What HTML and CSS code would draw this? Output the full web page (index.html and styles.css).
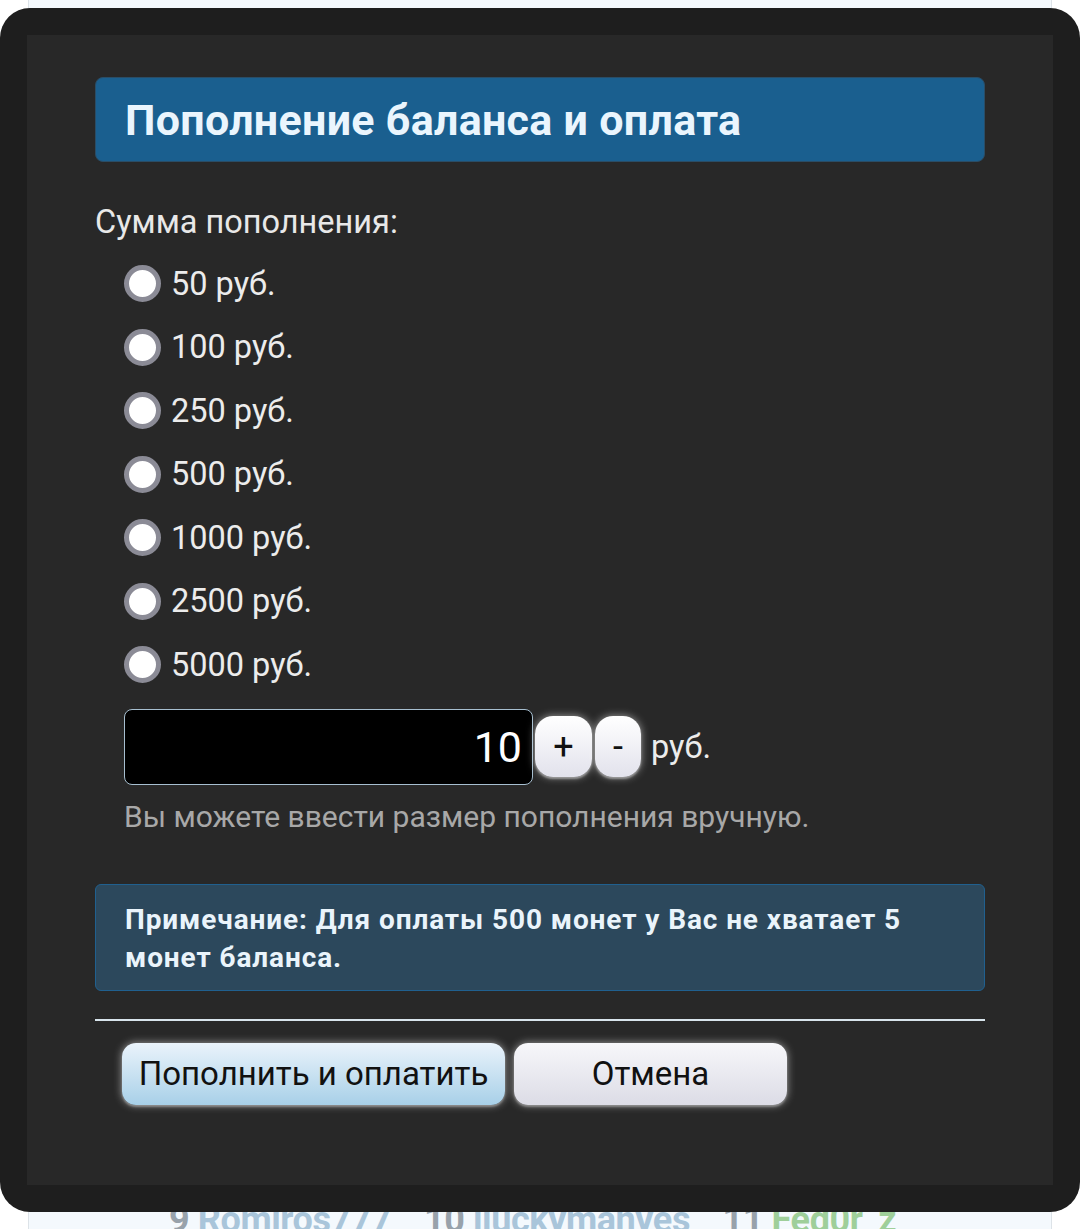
FILE: index.html
```
<!DOCTYPE html>
<html>
<head>
    <title>Пополнение баланса и оплата</title>
    <link rel="stylesheet" href="styles.css">
</head>
<body>
    <div class="page">
        <div class="top-list">
            <span class="num">9</span> <span class="nick">Romiros777</span>
            <span class="num">10</span> <span class="nick">iluckymanyes</span>
            <span class="num">11</span> <span class="nick green">Fed0r_z</span>
        </div>
    </div>

    <div class="modal">
        <div class="modal-inner">
            <h1 class="title">Пополнение баланса и оплата</h1>

            <div class="label">Сумма пополнения:</div>
            <div class="sums">
                <label class="sum"><input type="radio" name="sum" value="50"> 50 руб.</label>
                <label class="sum"><input type="radio" name="sum" value="100"> 100 руб.</label>
                <label class="sum"><input type="radio" name="sum" value="250"> 250 руб.</label>
                <label class="sum"><input type="radio" name="sum" value="500"> 500 руб.</label>
                <label class="sum"><input type="radio" name="sum" value="1000"> 1000 руб.</label>
                <label class="sum"><input type="radio" name="sum" value="2500"> 2500 руб.</label>
                <label class="sum"><input type="radio" name="sum" value="5000"> 5000 руб.</label>

                <div class="custom">
                    <input type="text" class="amount" id="amount" value="10">
                    <button class="step step-plus" onclick="step(1)">+</button>
                    <button class="step step-minus" onclick="step(-1)">-</button>
                    <span class="unit">руб.</span>
                </div>
                <p class="hint">Вы можете ввести размер пополнения вручную.</p>
            </div>

            <div class="note">
                Примечание: Для оплаты 500 монет у Вас не хватает 5 монет баланса.
            </div>

            <hr class="line">

            <div class="actions">
                <button class="btn btn-pay">Пополнить и оплатить</button>
                <button class="btn btn-cancel">Отмена</button>
            </div>
        </div>
    </div>

    <script>
        function step(d) {
            const el = document.getElementById('amount');
            const v = parseInt(el.value, 10) || 0;
            el.value = Math.max(0, v + d);
        }
    </script>
</body>
</html>
```

FILE: styles.css
```
body {
    margin: 0;
    font-family: Roboto, "Liberation Sans", sans-serif;
    background: #ffffff;
}

.page {
    margin: 0 28px;
    height: 1229px;
    background: #f4f9fd;
    border-left: 1px solid #dde3e8;
    border-right: 1px solid #dde3e8;
    display: flex;
    flex-direction: column;
    justify-content: flex-end;
}

.top-list {
    font-size: 36px;
    font-weight: bold;
    letter-spacing: -0.4px;
    padding-left: 140px;
    margin-bottom: -12px;
    white-space: nowrap;
}

.num {
    color: #98a2ab;
}

.nick {
    color: #a9c5da;
    margin-right: 24px;
}

.nick.green {
    color: #9fcf9a;
}

/* dialog over the page */
.modal {
    position: fixed;
    left: 0;
    top: 8px;
    width: 1080px;
    height: 1204px;
    box-sizing: border-box;
    padding: 27px;
    background: #1e1e1e;
    border-radius: 30px;
}

.modal-inner {
    height: 100%;
    box-sizing: border-box;
    background: #282828;
    padding: 42px 68px 0 68px;
    color: #e6e6e6;
}

.title {
    margin: 0;
    height: 85px;
    box-sizing: border-box;
    padding: 0 29px;
    display: flex;
    align-items: center;
    background: #1a5f8f;
    border: 1px solid #2a4d66;
    border-radius: 8px;
    color: #eaf5fd;
    font-size: 43px;
    letter-spacing: 0.3px;
    font-weight: bold;
}

.label {
    margin-top: 40px;
    font-size: 32.5px;
    line-height: 40px;
    color: #e8e8e8;
}

.sums {
    margin-top: 10px;
    padding-left: 29px;
}

.sum {
    display: flex;
    align-items: center;
    height: 63.5px;
    font-size: 32.5px;
    color: #ececec;
}

.sum input[type="radio"] {
    appearance: none;
    -webkit-appearance: none;
    width: 37px;
    height: 37px;
    margin: 0 10px 0 0;
    border: 5px solid #8b8b96;
    border-radius: 50%;
    background: #ffffff;
    box-sizing: border-box;
}

.custom {
    display: flex;
    align-items: center;
    margin-top: 12px;
}

.amount {
    width: 409px;
    height: 76px;
    box-sizing: border-box;
    background: #000000;
    border: 1.5px solid #a7bfd0;
    border-radius: 8px;
    color: #ffffff;
    font-family: Roboto, "Liberation Sans", sans-serif;
    font-size: 43px;
    text-align: right;
    padding: 0 10px;
}

.step {
    height: 61px;
    margin-left: 2px;
    padding: 0;
    border: none;
    border-radius: 18px;
    background: linear-gradient(#ffffff, #e2e2ec);
    box-shadow: 0 0 8px rgba(255, 255, 255, 0.55), 0 2px 2px #777;
    font-family: Roboto, "Liberation Sans", sans-serif;
    font-size: 36px;
    color: #111;
}

.step-plus {
    width: 57px;
}

.step-minus {
    width: 46px;
    margin-left: 3px;
}

.unit {
    margin-left: 10px;
    font-size: 32.5px;
    color: #ececec;
}

.hint {
    margin: 14px 0 0 0;
    font-size: 30px;
    line-height: 36px;
    color: #a8a8a8;
}

.note {
    margin-top: 49px;
    height: 107px;
    box-sizing: border-box;
    padding: 16px 29px;
    background: #2c485c;
    border: 1.5px solid #20608f;
    border-radius: 6px;
    color: #eaf4fb;
    font-size: 28px;
    letter-spacing: 0.9px;
    font-weight: bold;
    line-height: 38px;
}

.line {
    margin: 28px 0 0 0;
    border: none;
    border-top: 2px solid #d8e4ec;
}

.actions {
    display: flex;
    gap: 9px;
    margin-top: 22px;
    padding-left: 27px;
}

.btn {
    height: 62px;
    border: none;
    border-radius: 14px;
    font-family: Roboto, "Liberation Sans", sans-serif;
    font-size: 33px;
    color: #111;
    box-shadow: 0 0 9px rgba(255, 255, 255, 0.55), 0 2px 2px #666;
}

.btn-pay {
    width: 383px;
    background: linear-gradient(#eaf3fb, #a8d0e8);
}

.btn-cancel {
    width: 273px;
    background: linear-gradient(#f7f7fa, #dcdce6);
}
```
